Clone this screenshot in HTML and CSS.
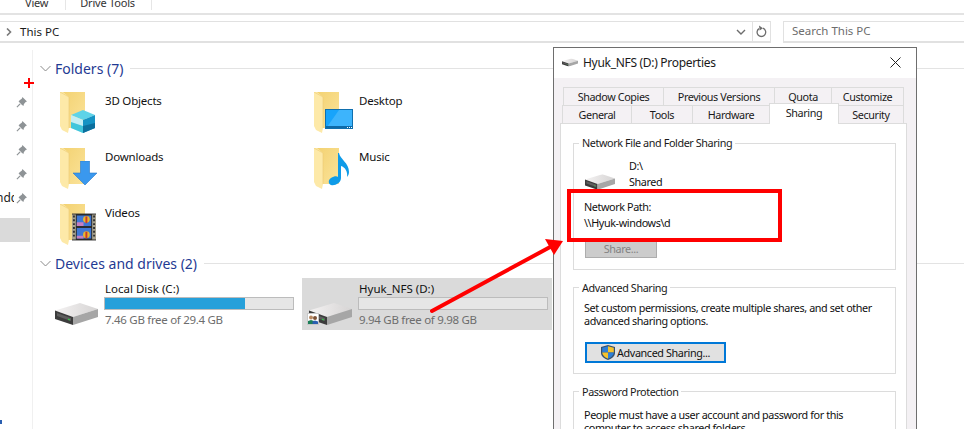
FILE: index.html
```html
<!DOCTYPE html>
<html lang="en">
<head>
<meta charset="utf-8">
<title>This PC</title>
<link rel="stylesheet" href="styles.css">
</head>
<body>
<svg class="defs" width="0" height="0" aria-hidden="true">
  <defs>
    <linearGradient id="fb" x1="0" y1="0" x2="1" y2="1"><stop offset="0" stop-color="#f3d272"/><stop offset="1" stop-color="#fbe39a"/></linearGradient>
    <linearGradient id="dt" x1="0" y1="0" x2="1" y2="0"><stop offset="0" stop-color="#f4f2f2"/><stop offset="1" stop-color="#d6d4d4"/></linearGradient>
    <symbol id="folder" viewBox="0 0 26 41">
      <path d="M3 0H25V36H9L3 30Z" fill="url(#fb)"/>
      <path d="M0 0L3 0L9 5V36L8 41L2 38L0 34Z" fill="#fde9a8"/>
      <path d="M0 0L9 5V36" fill="none" stroke="#eccb74" stroke-width=".6"/>
    </symbol>
    <symbol id="pin" viewBox="0 0 12 12">
      <path d="M7 0L12 5L10.5 5.5L8.5 8L8.5 9.5L6.8 9L2.8 5L4 3.5L6.5 1.5Z" fill="#8e9396"/>
      <path d="M4.5 7.5L1 11" stroke="#8e9396" stroke-width="1.3"/>
    </symbol>
    <symbol id="drive" viewBox="0 0 43 22">
      <path d="M0 7.500L25 0L43 6L18 14Z" fill="url(#dt)"/>
      <path d="M0 7.500L18 14V22L0 16Z" fill="#3c3c3c"/>
      <path d="M2 10L16 15V18L2 13Z" fill="#5e5e5e"/>
      <path d="M13 15.500L15 16.200V17.600L13 16.900Z" fill="#36c24a"/>
      <path d="M18 14L43 6V14L18 22Z" fill="#a6a6a6"/>
    </symbol>
  </defs>
</svg>

<div class="page">
  <header class="ribbon">
    <span class="ribbon-tab">View</span>
    <span class="ribbon-tab ribbon-tab-tools">Drive Tools</span>
  </header>
  <div class="address-row">
    <div class="address-box">
      <svg class="crumb" width="6" height="8" viewBox="0 0 6 8"><path d="M1 0.5L4.5 4L1 7.5" fill="none" stroke="#7a7a7a" stroke-width="1.6"/></svg>
      <span class="address-text">This PC</span>
      <svg class="drop" width="10" height="6" viewBox="0 0 10 6"><path d="M1 1L5 5L9 1" fill="none" stroke="#6d6d6d" stroke-width="1.4"/></svg>
      <span class="refresh">
        <svg width="11" height="13" viewBox="0 0 11 13"><path d="M7 3.2A4.3 4.3 0 1 1 3 3.6" fill="none" stroke="#6d6d6d" stroke-width="1.3"/><path d="M3 0.5L7 3.2L3.6 5.5Z" fill="#6d6d6d"/></svg>
      </span>
    </div>
    <div class="search-box">Search This PC</div>
  </div>

  <div class="main">
    <aside class="nav">
      <div class="nav-row"><span class="nav-label"></span><svg class="pin"><use href="#pin"/></svg></div>
      <div class="nav-row"><span class="nav-label"></span><svg class="pin"><use href="#pin"/></svg></div>
      <div class="nav-row"><span class="nav-label"></span><svg class="pin"><use href="#pin"/></svg></div>
      <div class="nav-row"><span class="nav-label"></span><svg class="pin"><use href="#pin"/></svg></div>
      <div class="nav-row"><span class="nav-label">ndc</span><svg class="pin"><use href="#pin"/></svg></div>
      <div class="nav-selected"></div>
    </aside>
    <main class="content">
      <div class="section-head">
        <svg class="chev" width="11" height="7" viewBox="0 0 11 7"><path d="M.5 1L5.5 6L10.5 1" fill="none" stroke="#8a8a8a"/></svg>
        <span class="section-title">Folders (7)</span>
        <span class="section-rule"></span>
      </div>
      <div class="folder-grid">
        <div class="folder">
          <span class="folder-icon">
            <svg class="folder-base"><use href="#folder"/></svg>
            <svg class="badge" width="24" height="25" viewBox="0 0 24 25"><path d="M0 6L12 1L24 6L12 11Z" fill="#5ed3e8"/><path d="M0 6L12 11V24L0 19Z" fill="#c5eef4"/><path d="M12 11L24 6V19L12 24Z" fill="#1593c4"/><path d="M0 19L12 24V17L0 13Z" fill="#41c6dc"/><path d="M12 24L24 19V14L12 17Z" fill="#0c6f9d"/></svg>
          </span>
          <span class="folder-name">3D Objects</span>
        </div>
        <div class="folder">
          <span class="folder-icon">
            <svg class="folder-base"><use href="#folder"/></svg>
            <svg class="badge" width="28" height="20" viewBox="0 0 28 20"><rect x=".5" y=".5" width="27" height="19" fill="#17a4fb" stroke="#0f6fae"/><path d="M14 1H27V18H2Z" fill="#3db4fc"/><rect x="1" y="17" width="26" height="2" fill="#0d6aa8"/><path d="M22 18h1v1h-1zM24 18h1v1h-1zM26 18h1v1h-1z" fill="#fff"/></svg>
          </span>
          <span class="folder-name">Desktop</span>
        </div>
        <div class="folder">
          <span class="folder-icon">
            <svg class="folder-base"><use href="#folder"/></svg>
            <svg class="badge badge-down" width="24" height="24" viewBox="0 0 24 24"><path d="M7.5 0H16.500V12H24L12 24L0 12H7.500Z" fill="#3a98ee" stroke="#2a78c8" stroke-width=".6"/></svg>
          </span>
          <span class="folder-name">Downloads</span>
        </div>
        <div class="folder">
          <span class="folder-icon">
            <svg class="folder-base"><use href="#folder"/></svg>
            <svg class="badge badge-music" width="22" height="33" viewBox="0 0 22 33"><path d="M11 0C12 6 21 10 21 19C21 21 20 23 19 24C20 19 17 14 13 13V25C13 30 7 33 3 32C0 31 0 27 3 25C6 23 9 23 10 24V0Z" fill="#0f9be8"/></svg>
          </span>
          <span class="folder-name">Music</span>
        </div>
        <div class="folder">
          <span class="folder-icon">
            <svg class="folder-base"><use href="#folder"/></svg>
            <svg class="badge badge-video" width="24" height="28" viewBox="0 0 25 28">
              <rect width="25" height="28" fill="#2b2b2b"/>
              <path d="M0 1h4v26h-4zM21 1h4v26h-4z" fill="#a9a38f"/>
              <path d="M1 2h2v2h-2zM1 6h2v2h-2zM1 10h2v2h-2zM1 14h2v2h-2zM1 18h2v2h-2zM1 22h2v2h-2zM22 2h2v2h-2zM22 6h2v2h-2zM22 10h2v2h-2zM22 14h2v2h-2zM22 18h2v2h-2zM22 22h2v2h-2z" fill="#333"/>
              <rect x="5" y="2" width="15" height="11" fill="#3f78d6"/>
              <rect x="5" y="15" width="15" height="11" fill="#3f78d6"/>
              <path d="M5 9h7v4h-7zM5 23h7v3h-7z" fill="#c77fc0"/>
              <circle cx="15" cy="6" r="3.500" fill="#e8b52e"/><rect x="14" y="3" width="2" height="7" fill="#c93a2a"/>
              <circle cx="15" cy="22" r="3.500" fill="#e8b52e"/><rect x="14" y="19" width="2" height="7" fill="#c93a2a"/>
            </svg>
          </span>
          <span class="folder-name">Videos</span>
        </div>
      </div>

      <div class="section-head section-devices">
        <svg class="chev" width="11" height="7" viewBox="0 0 11 7"><path d="M.5 1L5.5 6L10.5 1" fill="none" stroke="#8a8a8a"/></svg>
        <span class="section-title">Devices and drives (2)</span>
        <span class="section-rule"></span>
      </div>
      <div class="drive-grid">
        <div class="drive">
          <svg class="drive-icon"><use href="#drive"/></svg>
          <div class="drive-info">
            <div class="drive-name">Local Disk (C:)</div>
            <div class="meter"><div class="meter-fill" style="width:74.5%"></div></div>
            <div class="drive-free">7.46 GB free of 29.4 GB</div>
          </div>
        </div>
        <div class="drive drive-selected">
          <span class="drive-wrap">
            <svg class="drive-icon"><use href="#drive"/></svg>
            <span class="share-badge">
              <svg width="10" height="9" viewBox="0 0 10 9"><circle cx="3" cy="2.500" r="2" fill="#b98a62"/><path d="M0 9V6L3 5L6 6V9Z" fill="#1c7f58"/><circle cx="7" cy="3" r="2" fill="#7c5236"/><path d="M4.500 9V6.500L7 5.500L10 6.500V9Z" fill="#2a5fb0"/></svg>
            </span>
          </span>
          <div class="drive-info">
            <div class="drive-name">Hyuk_NFS (D:)</div>
            <div class="meter"></div>
            <div class="drive-free">9.94 GB free of 9.98 GB</div>
          </div>
        </div>
      </div>
    </main>
  </div>

  <section class="dialog">
    <div class="dialog-title">
      <svg class="title-icon" width="16" height="9" viewBox="0 0 43 22"><use href="#drive"/></svg>
      <span class="dialog-caption">Hyuk_NFS (D:) Properties</span>
      <svg class="close" width="11" height="11" viewBox="0 0 11 11"><path d="M.5 .5L10.500 10.500M10.500 .5L.5 10.500" stroke="#222" fill="none"/></svg>
    </div>
    <div class="dialog-body">
      <div class="tabs tabs-back">
        <span class="tab t-shadow">Shadow Copies</span>
        <span class="tab t-prev">Previous Versions</span>
        <span class="tab t-quota">Quota</span>
        <span class="tab t-custom">Customize</span>
      </div>
      <div class="tabs tabs-front">
        <span class="tab t-general">General</span>
        <span class="tab t-tools">Tools</span>
        <span class="tab t-hardware">Hardware</span>
        <span class="tab tab-active">Sharing</span>
        <span class="tab t-security">Security</span>
      </div>
      <div class="panel">
        <div class="group group-net">
          <div class="legend">Network File and Folder Sharing</div>
          <div class="share-status">
            <svg class="status-drive" width="30" height="16" viewBox="0 0 43 22"><use href="#drive"/></svg>
            <div class="status-lines"><div>D:\</div><div>Shared</div></div>
          </div>
          <div class="net-path"><div>Network Path:</div><div>\\Hyuk-windows\d</div></div>
          <div class="btn btn-disabled">Share...</div>
        </div>
        <div class="group group-adv">
          <div class="legend">Advanced Sharing</div>
          <p class="group-text">Set custom permissions, create multiple shares, and set other<br>advanced sharing options.</p>
          <div class="btn btn-default">
            <svg width="14" height="15" viewBox="0 0 14 15"><path d="M7 0L14 2V8C14 11.500 10 14 7 15C4 14 0 11.500 0 8V2Z" fill="#35506e"/><path d="M7 1.200V7.500H1.200V2.800Z" fill="#2f7fd6"/><path d="M7 1.200L12.800 2.800V7.500H7Z" fill="#f6c32c"/><path d="M1.200 7.500H7V13.700C4.500 12.700 1.500 10.700 1.200 7.500Z" fill="#f6c32c"/><path d="M7 7.500H12.800C12.500 10.700 9.500 12.700 7 13.700Z" fill="#2f7fd6"/></svg>
            <span>Advanced Sharing...</span>
          </div>
        </div>
        <div class="group group-pass">
          <div class="legend">Password Protection</div>
          <p class="group-text">People must have a user account and password for this<br>computer to access shared folders.</p>
        </div>
      </div>
    </div>
  </section>

  <svg class="plus" width="10" height="10" viewBox="0 0 10 10"><path d="M4 0h2v4h4v2h-4v4h-2v-4h-4v-2h4z" fill="#f00"/></svg>
  <div class="callout"></div>
  <svg class="arrow" width="140" height="80" viewBox="0 0 140 80"><path d="M4 75L124 10" stroke="#f00" stroke-width="4" stroke-linecap="round" fill="none"/><path d="M135 5L117 3L126 19Z" fill="#f00"/></svg>
  <span class="corner-dot"></span>
</div>
</body>
</html>
```
FILE: styles.css
```css
* { box-sizing: border-box; }
html, body { margin: 0; padding: 0; background: #fff; }
body { font-family: "Noto Sans", "Open Sans", sans-serif; font-size: 11px; color: #111; }
.defs { position: absolute; }
.page { position: relative; width: 964px; height: 429px; overflow: hidden; background: #fff; display: flex; flex-direction: column; }

.ribbon { height: 15px; border-bottom: 2px solid #e3e3e3; display: flex; flex: none; overflow: hidden; }
.ribbon-tab { line-height: 14px; margin-top: -4px; height: 14px; padding: 0 17px 0 25px; color: #333; letter-spacing: -.2px; border-right: 1px solid #e6e6e6; }
.ribbon-tab-tools { padding: 0 16px 0 14px; }

.address-row { height: 22px; margin-top: 6px; display: flex; flex: none; }
.address-box { width: 771px; border: 1px solid #e1e1e1; border-width: 1px 1px 2px 0; display: flex; align-items: center; }
.crumb { margin-left: 6px; }
.address-text { margin-left: 8px; flex: 1; font-size: 11.500px; color: #1a1a1a; }
.drop { margin-right: 3px; }
.refresh { width: 18px; height: 100%; border-left: 1px solid #e1e1e1; margin-left: 3px; display: flex; align-items: center; justify-content: center; }
.search-box { margin-left: 12px; flex: 1; border: 1px solid #e1e1e1; border-width: 1px 0 2px 1px; padding-left: 8px; line-height: 18px; color: #6d6d6d; font-size: 11.500px; }

.main { flex: 1; display: flex; min-height: 0; margin-top: 7px; }
.nav { width: 33px; flex: none; border-right: 1px solid #f0f0f0; padding-top: 40px; overflow: hidden; }
.nav-row { height: 24px; display: flex; align-items: center; justify-content: flex-end; padding-right: 5px; }
.nav-label { flex: 1; margin-left: -4px; white-space: nowrap; overflow: hidden; font-size: 12px; line-height: 14px; color: #222; }
.pin { width: 11px; height: 11px; flex: none; margin-left: 2px; }
.nav-selected { height: 24px; width: 30px; margin-top: 8px; background: #dadada; }

.content { flex: 1; min-width: 0; padding: 8px 0 0 7px; }
.section-head { height: 20px; display: flex; align-items: center; }
.chev { flex: none; }
.section-title { margin-left: 4px; color: #1f3a93; font-size: 14px; white-space: nowrap; }
.section-rule { flex: 1; margin-left: 7px; height: 1px; background: #e3e3e3; }

.folder-grid { display: grid; grid-template-columns: 254px 254px; grid-template-rows: 56px 56px 46px; margin-top: 14px; margin-left: 8px; }
.folder { display: flex; }
.folder-icon { position: relative; width: 45px; height: 46px; margin-left: 12px; flex: none; }
.folder-base { width: 26px; height: 41px; display: block; }
.badge { position: absolute; left: 11px; top: 17px; }
.badge-down { left: 13px; top: 13px; }
.badge-music { left: 14px; top: 5px; }
.badge-video { left: 12px; top: 9px; }
.folder-name { font-size: 11.500px; letter-spacing: -.2px; line-height: 16px; margin-top: 1px; color: #111; }

.section-devices { margin-top: 3px; }
.drive-grid { display: grid; grid-template-columns: 254px 250px; margin-top: 5px; margin-left: 8px; }
.drive { height: 52px; display: flex; }
.drive-icon { width: 43px; height: 22px; display: block; }
.drive > .drive-icon { margin: 25px 0 0 7px; }
.drive-wrap { position: relative; width: 43px; height: 22px; margin: 25px 0 0 7px; flex: none; }
.share-badge { position: absolute; left: -2px; top: 10px; width: 12px; height: 12px; background: #fff; border: 1px solid #c8c8c8; display: flex; align-items: center; justify-content: center; }
.drive-selected { background: #dadada; }
.drive-info { width: 189px; margin-left: 7px; padding-top: 3px; flex: none; }
.drive-name { font-size: 11.500px; line-height: 16px; color: #111; }
.meter { height: 13px; margin-top: 0; background: #e6e6e6; border: 1px solid #bcbcbc; margin-left: -1px; }
.meter-fill { height: 100%; background: #26a0da; }
.drive-free { font-size: 11.500px; letter-spacing: -.3px; line-height: 16px; margin-top: 2px; color: #6d6d6d; }

.dialog { position: absolute; left: 553px; top: 47px; width: 364px; height: 400px; background: #f4f1f4; border: 1px solid #6e6e6e; font-size: 10.800px; letter-spacing: -.4px; }
.dialog-title { height: 30px; background: #fff; display: flex; align-items: center; padding: 0 15px 2px 8px; }
.title-icon { flex: none; }
.dialog-caption { margin-left: 5px; flex: 1; font-size: 12px; color: #1a1a1a; letter-spacing: -.3px; }
.dialog-body { padding-top: 9px; }
.tabs { display: flex; height: 18px; }
.tab { height: 18px; line-height: 17px; text-align: center; border: 1px solid #dcdcdc; border-width: 1px 1px 0 1px; margin-right: -1px; background: #f4f1f4; color: #1a1a1a; }
.tabs-back { margin-left: 9px; }
.tabs-front { margin-left: 8px; position: relative; z-index: 1; }
.t-shadow { width: 101px; }
.t-prev { width: 112px; }
.t-quota { width: 58px; }
.t-custom { width: 73px; }
.t-general { width: 70px; }
.t-tools { width: 62px; }
.t-hardware { width: 78px; }
.tab-active { width: 70px; height: 21px; margin-top: -2px; line-height: 18px; background: #fff; border-color: #dcdcdc; position: relative; z-index: 2; }
.t-security { width: 66px; }
.panel { margin-left: 6px; width: 347px; height: 320px; background: #fff; border: 1px solid #dcdcdc; padding: 19px 10px 0 12px; }

.group { border: 1px solid #dcdcdc; padding: 0 10px; }
.group-net { height: 127px; }
.group-adv { height: 87px; margin-top: 17px; }
.group-pass { margin-top: 17px; height: 80px; }
.legend { display: table; margin: -9px 0 0 -5px; padding: 0 3px; background: #fff; line-height: 16px; color: #1a1a1a; }
.group-adv .legend, .group-pass .legend { margin-top: -8px; }
.share-status { display: flex; margin-top: 7px; }
.status-drive { margin: 16px 0 0 1px; flex: none; }
.status-lines { margin-left: 14px; line-height: 16px; }
.net-path { line-height: 16px; margin-top: 9px; }
.btn { display: flex; align-items: center; justify-content: center; margin-left: 1px; }
.btn-disabled { width: 72px; height: 19px; margin-top: 8px; background: #cccccc; border: 1px solid #adadad; color: #838383; }
.group-text { margin: 5px 0 0; line-height: 13px; white-space: nowrap; }
.btn-default { width: 141px; height: 21px; margin-top: 15px; background: #e1e1e1; border: 2px solid #0078d7; gap: 2px; }
.group-pass .group-text { margin-top: 8px; }

.plus { position: absolute; left: 24px; top: 78px; }
.callout { position: absolute; left: 567px; top: 189px; width: 215px; height: 53px; border: 4px solid #f00; }
.arrow { position: absolute; left: 428px; top: 236px; }
.corner-dot { position: absolute; left: 0; top: 420px; width: 2px; height: 4px; background: #2a5fb0; }
```
